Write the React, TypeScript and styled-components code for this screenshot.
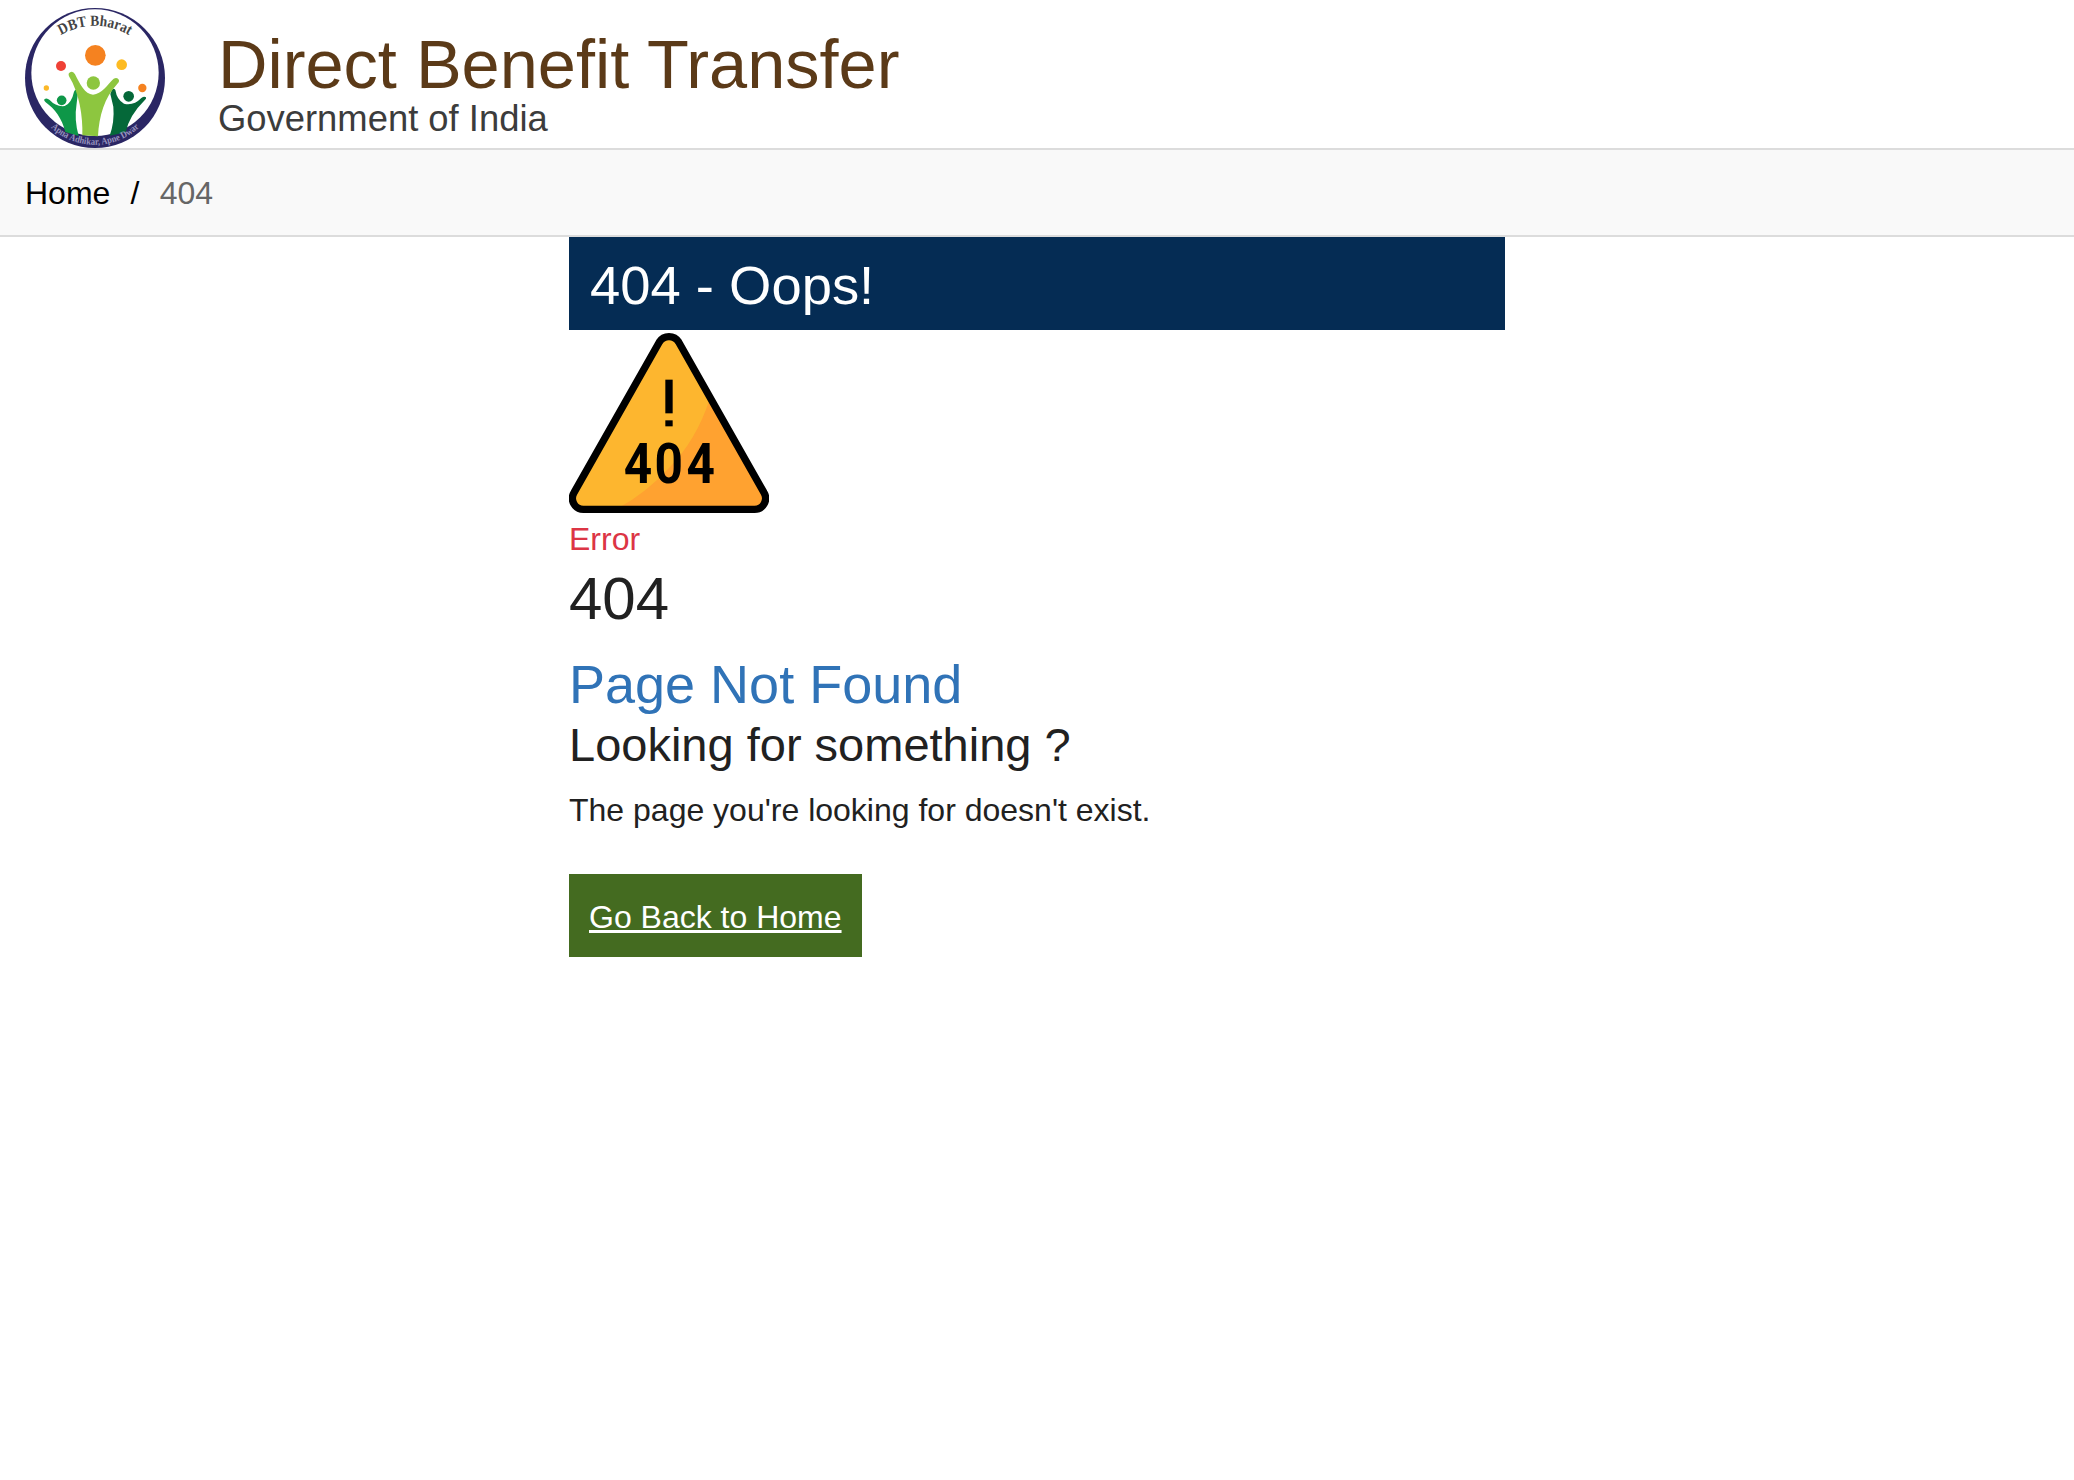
import React from "react";
import styled, { createGlobalStyle } from "styled-components";

const GlobalStyle = createGlobalStyle`
  * { box-sizing: border-box; }
  body {
    margin: 0;
    background: #fff;
    color: #212121;
    font-family: "Liberation Sans", Arial, sans-serif;
    font-size: 32px;
    line-height: 48px;
  }
`;

const Header = styled.header`
  display: flex;
  gap: 53px;
  height: 150px;
  padding: 8px 25px 0;
  border-bottom: 2px solid #dcdcdc;
`;

const LogoImage = styled.svg`
  width: 140px;
  height: 140px;
  flex: none;
`;

const Brand = styled.div`
  padding-top: 23px;
`;

const SiteTitle = styled.div`
  color: #5b3a18;
  font-size: 68.5px;
  line-height: 68px;
`;

const SiteOwner = styled.div`
  color: #3c3c3c;
  font-size: 36.4px;
  line-height: 40px;
`;

const Breadcrumb = styled.nav`
  display: flex;
  gap: 20.2px;
  height: 87px;
  padding: 19px 25px 0;
  background: #f9f9f9;
  border-bottom: 2px solid #dcdcdc;
  color: #000;
`;

const Crumb = styled.a`
  color: #000;
  text-decoration: none;
`;

const CurrentCrumb = styled.span`
  color: #666;
`;

const Content = styled.main`
  width: 936px;
  margin: 0 auto;
`;

const Banner = styled.h1`
  margin: 0;
  height: 93px;
  padding: 22px 21px 0;
  background: #052c54;
  color: #fff;
  font-size: 54.4px;
  font-weight: 400;
  line-height: 54px;
`;

const WarningImage = styled.svg`
  display: block;
  width: 200px;
  height: 185px;
`;

const ErrorLabel = styled.div`
  color: #dc3545;
`;

const ErrorCode = styled.div`
  font-size: 60px;
  line-height: 72px;
`;

const NotFoundTitle = styled.h2`
  margin: 17px 0 0;
  color: #3073b7;
  font-size: 54px;
  font-weight: 400;
  line-height: 64px;
`;

const Question = styled.h3`
  margin: 0;
  font-size: 47px;
  font-weight: 400;
  line-height: 57px;
`;

const Message = styled.p`
  margin: 13px 0 40px;
`;

const HomeButton = styled.a`
  display: inline-block;
  padding: 22px 20px 18px;
  background: #446b20;
  color: #fff;
  line-height: 43px;
  text-decoration: underline;
  text-decoration-thickness: 3px;
`;

function Logo() {
  return (
    <LogoImage viewBox="30 24 420 420" role="img" aria-label="DBT Bharat">
      <defs>
        <path id="logo-top" d="M67 177 A200 200 0 0 1 413 177" />
        <path id="logo-bottom" d="M56 302 A194 194 0 0 0 424 302" />
      </defs>
      <circle cx="240" cy="234" r="210" fill="#2a2664" />
      <ellipse cx="240" cy="218" rx="191" ry="190" fill="#fff" />
      <text fontFamily="Liberation Serif, serif" fontWeight="700" fontSize="46" fill="#444" textAnchor="middle">
        <textPath href="#logo-top" startOffset="50%" textLength="214" lengthAdjust="spacingAndGlyphs">DBT Bharat</textPath>
      </text>
      <circle cx="241" cy="166" r="31" fill="#f58220" />
      <circle cx="138" cy="198" r="15" fill="#ef4136" />
      <circle cx="320" cy="194" r="16" fill="#fdbb22" />
      <circle cx="94" cy="264" r="8" fill="#fbb829" />
      <circle cx="382" cy="264" r="12.5" fill="#f58220" />
      <path d="M88 298 Q95 292 104 300 Q123 321 149 318 Q170 309 177 275 Q181 265 190 270 L185 310 Q177 360 191 408 L151 396 C141 356 120 327 92 307 Q86 303 88 298Z" fill="#0e9748" />
      <circle cx="140" cy="301" r="14.5" fill="#0e9748" />
      <path d="M393 292 Q388 287 379 294 Q356 318 327 311 Q306 300 301 270 Q293 259 286 282 L295 320 Q299 365 284 407 L332 397 Q343 346 389 301 Q395 296 393 292Z" fill="#056839" />
      <circle cx="341" cy="289" r="16" fill="#056839" />
      <path d="M162 229 Q158 219 167 216 Q175 213 180 223 C195 252 210 284 234 284 C260 282 278 253 296 236 Q307 230 312 240 Q314 247 306 253 C269 292 252 348 249 409 L202 406 C204 350 193 279 162 229Z" fill="#8dc63f" />
      <circle cx="235" cy="249" r="20" fill="#8dc63f" />
      <text fontFamily="Liberation Serif, serif" fontWeight="700" fontSize="29" fill="#9793be" textAnchor="middle">
        <textPath href="#logo-bottom" startOffset="50%" textLength="292" lengthAdjust="spacingAndGlyphs">Apna Adhikar, Apne Dwar</textPath>
      </text>
    </LogoImage>
  );
}

function WarningSign() {
  return (
    <WarningImage viewBox="27 15 600 555" role="img" aria-label="404">
      <g transform="translate(0 1)">
        <path d="M298 50 A34 34 0 0 1 356 50 L612 502 A33 33 0 0 1 584 552 H70 A33 33 0 0 1 42 502 Z" fill="#fdb62f" />
        <path d="M448 225 Q408 345 330 425 Q260 502 175 548 H584 Q612 540 612 502 Z" fill="#ffa230" />
        <path d="M298 50 A34 34 0 0 1 356 50 L612 502 A33 33 0 0 1 584 552 H70 A33 33 0 0 1 42 502 Z" fill="none" stroke="#000" strokeWidth="22" />
        <rect x="316" y="163" width="22" height="101" />
        <rect x="316" y="285" width="22" height="18" />
        <text transform="scale(.88 1)" x="217 322 431" y="474" fontFamily="Roboto, sans-serif" fontWeight="700" fontSize="169">
          404
        </text>
      </g>
    </WarningImage>
  );
}

export default function App() {
  return (
    <>
      <GlobalStyle />
      <Header>
        <Logo />
        <Brand>
          <SiteTitle>Direct Benefit Transfer</SiteTitle>
          <SiteOwner>Government of India</SiteOwner>
        </Brand>
      </Header>
      <Breadcrumb>
        <Crumb href="#">Home</Crumb>
        <span>/</span>
        <CurrentCrumb>404</CurrentCrumb>
      </Breadcrumb>
      <Content>
        <Banner>404 - Oops!</Banner>
        <WarningSign />
        <ErrorLabel>Error</ErrorLabel>
        <ErrorCode>404</ErrorCode>
        <NotFoundTitle>Page Not Found</NotFoundTitle>
        <Question>Looking for something ?</Question>
        <Message>The page you're looking for doesn't exist.</Message>
        <HomeButton href="#">Go Back to Home</HomeButton>
      </Content>
    </>
  );
}
